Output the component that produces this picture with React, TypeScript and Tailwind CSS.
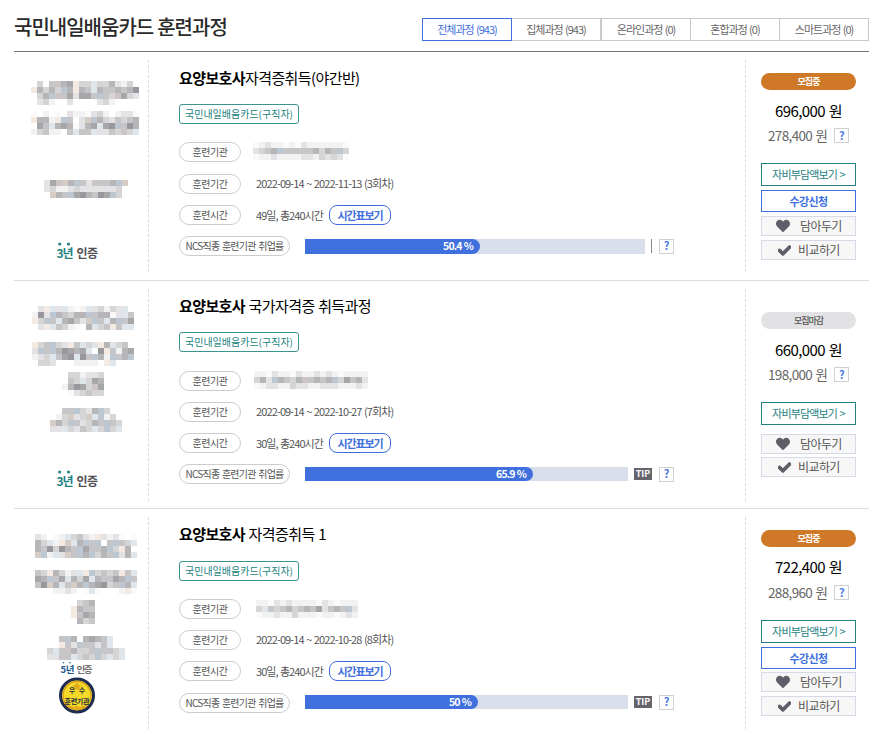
import React from 'react';
import clsx from 'clsx';
import { FaCheck, FaHeart } from 'react-icons/fa';

type Block = { x: number; y: number; rows: string[] };

type Course = {
  keyword: string;
  title: string;
  period: string;
  hours: string;
  rate: string;
  open: boolean;
  price: string;
  selfPay: string;
  tip: boolean;
  rowsClass: string;
  barClass: string;
  fillClass: string;
  institution: Block;
  logo: Block[];
  award?: boolean;
};

const tabs = ['전체과정 (943)', '집체과정 (943)', '온라인과정 (0)', '혼합과정 (0)', '스마트과정 (0)'];

// shades of the censored names, one character for each 6px cell
const shades: Record<string, string> = {
  '0': '#fafafb',
  '1': '#f2f2f3',
  '2': '#e3e3e5',
  '3': '#d5d5d6',
  '4': '#c6c6c8',
  '5': '#b6b6b9',
  '6': '#a7a6a9',
  '7': '#97979c',
  b: '#dfe6ec',
  c: '#bcc7d1',
  w: '#f5eae2',
  v: '#d5cdc5',
  p: '#cdc5c5',
};

const courses: Course[] = [
  {
    keyword: '요양보호사',
    title: '자격증취득(야간반)',
    period: '2022-09-14 ~ 2022-11-13 (3회차)',
    hours: '49일, 총240시간',
    rate: '50.4 %',
    open: true,
    price: '696,000 원',
    selfPay: '278,400 원',
    tip: false,
    rowsClass: 'grid-rows-[44px_38px_32px_31px_31px_20px]',
    barClass: 'w-[340px] h-[15px]',
    fillClass: 'w-[175px]',
    institution: { x: 0, y: 0, rows: ['0121101021111110', '2345c444p45354c3', '0112111122132320'] },
    logo: [
      {
        x: 17,
        y: 21,
        rows: ['.3.4p56w33b335213.', 'w5353c5w54b5445457', '.35cp462664c43p63b', '.231..2....231....'],
      },
      {
        x: 17,
        y: 51,
        rows: ['0.1.0.2110231.1220', 'w551wc4.2vc5324345', '.64b5650256b67c475', '13411.4b44b2243p3b'],
      },
      { x: 30, y: 120, rows: ['26pv5c42p445cv', '2311232222223.', '.v54c675476c3.'] },
    ],
  },
  {
    keyword: '요양보호사',
    title: ' 국가자격증 취득과정',
    period: '2022-09-14 ~ 2022-10-27 (7회차)',
    hours: '30일, 총240시간',
    rate: '65.9 %',
    open: false,
    price: '660,000 원',
    selfPay: '198,000 원',
    tip: true,
    rowsClass: 'grid-rows-[43px_39px_31px_31px_31px_20px]',
    barClass: 'w-[323px] h-3.5',
    fillClass: 'w-[228px]',
    institution: { x: 1, y: 0, rows: ['1102110211212101111', '352c5435p4545c36452', '0122113221122211121'] },
    logo: [
      {
        x: 18,
        y: 17,
        rows: ['.2wb2b101b23132b.', '172c54355c45502b4', 'w3c4b5642vc4b5c46', '.2wb4310.5b34w4bb'],
      },
      {
        x: 18,
        y: 53,
        rows: ['w34c32w4b32w5b34.', '2c4c57656b.7w4156', '123b467b74c51c45c', '.332...1111.wb...'],
      },
      { x: 48, y: 83, rows: ['.331223', '.43b365', '15763p6', '.023433'] },
      { x: 36, y: 119, rows: ['..44c325c3..', '.13v23vbc13.', 'v53c42354c43', '22b3243b3c3b'] },
    ],
  },
  {
    keyword: '요양보호사',
    title: ' 자격증취득 1',
    period: '2022-09-14 ~ 2022-10-28 (8회차)',
    hours: '30일, 총240시간',
    rate: '50 %',
    open: true,
    price: '722,400 원',
    selfPay: '288,960 원',
    tip: true,
    rowsClass: 'grid-rows-[44px_38px_31px_31px_32px_20px]',
    barClass: 'w-[323px] h-3.5',
    fillClass: 'w-[173px]',
    institution: { x: 3, y: 1, rows: ['11021211110210111', '3b4345345462454c2', '01121131110110121'] },
    logo: [
      {
        x: 21,
        y: 17,
        rows: ['21.01b3421w2120.0', '53b1wvb5c4c.4c43b', '5473754c6445c3w5.', 'vc1b2v4c5c354c25b'],
      },
      {
        x: 21,
        y: 53,
        rows: ['43w5312bwc3434w4b', '65c46b536b54465c4', '47v5b4v5c56734c5b', '...1121.0b0...1w0'],
      },
      { x: 57, y: 83, rows: ['.345', 'w544', 'w465', '.534'] },
      { x: 33, y: 119, rows: ['..4c5.5654b..', '..w42c4424b..', '3b4p5334c443b', '2244b343c3b3b'] },
    ],
    award: true,
  },
];

function Mosaic({ blocks, width, height }: { blocks: Block[]; width: number; height: number }) {
  return (
    <svg width={width} height={height} shapeRendering="crispEdges" aria-hidden="true">
      {blocks.map((block, i) => (
        <g key={i} transform={`translate(${block.x} ${block.y})`}>
          {block.rows.map((row, y) =>
            row.split('').map((cell, x) =>
              shades[cell] ? <rect key={`${x}-${y}`} x={x * 6} y={y * 6} width="6" height="6" fill={shades[cell]} /> : null
            )
          )}
        </g>
      ))}
    </svg>
  );
}

function Help() {
  return (
    <button className="flex size-[15px] shrink-0 items-center justify-center border border-[#cfd0d4] bg-white pb-px text-[11px] font-bold leading-none text-[#4a78e0]">
      ?
    </button>
  );
}

function Label({ children, wide }: { children: React.ReactNode; wide?: boolean }) {
  return (
    <span
      className={clsx(
        'flex h-5 shrink-0 items-center justify-center rounded-full border border-[#ccc] pb-px text-[10px] text-[#555]',
        wide ? 'w-[111px] tracking-[-0.75px] [word-spacing:1px]' : 'w-[62px] tracking-[-0.5px]'
      )}
    >
      {children}
    </span>
  );
}

function Certified({ award }: { award?: boolean }) {
  if (award) {
    return (
      <svg width="40" height="54" viewBox="0 0 40 54" className="ml-[43px] -mt-px">
        <circle cx="6.5" cy="1.8" r="0.8" fill="#1d5a92" />
        <circle cx="13" cy="1.8" r="0.8" fill="#1d5a92" />
        <text x="3.5" y="12" fontSize="9.5" fontWeight="700" fill="#1d5a92" textLength="14">5년</text>
        <text x="19.5" y="12" fontSize="9.5" fontWeight="500" fill="#555" textLength="16">인증</text>
        <circle cx="20" cy="34.5" r="16.5" fill="#f5da2a" stroke="#1d2c50" strokeWidth="3" />
        <circle cx="20" cy="34.5" r="14" fill="none" stroke="#d9a520" strokeWidth="1.5" />
        <path d="M20 21l1.5 3 3 .5-2 2 .5 3-3-1.5-3 1.5.5-3-2-2 3-.5z" fill="#e1aa1c" />
        <path d="M11 44l3 1 3 1 3-1 3 1 3-1 3-1-3 3-6 1-6-1z" fill="#e1aa1c" />
        <text x="12" y="31.5" fontSize="6.5" fontWeight="700" fill="#222b3c">우</text>
        <text x="22" y="31.5" fontSize="6.5" fontWeight="700" fill="#222b3c">수</text>
        <text x="7.5" y="42.5" fontSize="7" fontWeight="700" fill="#222b3c" textLength="25">훈련기관</text>
      </svg>
    );
  }
  return (
    <svg width="44" height="20" viewBox="0 0 44 20" className="ml-[42px]">
      <circle cx="3.7" cy="2" r="1.6" fill="#238280" />
      <circle cx="12.5" cy="2" r="1.6" fill="#238280" />
      <text x="0.5" y="15.5" fontSize="12" fontWeight="700" fill="#238280" textLength="17">3년</text>
      <text x="20.5" y="15.5" fontSize="12" fontWeight="700" fill="#505054" textLength="21.5">인증</text>
    </svg>
  );
}

function CourseInfo({ course }: { course: Course }) {
  return (
    <div className={clsx('grid w-[596px] content-start items-start pl-[30px]', course.rowsClass)}>
      <h2
        className={clsx(
          'whitespace-pre text-[15px] leading-[22px] tracking-[-0.6px] text-black [word-spacing:0.8px]',
          course.tip ? 'mt-1.5' : 'mt-[7px]'
        )}
      >
        <strong className="font-bold">{course.keyword}</strong>
        {course.title}
      </h2>
      <span className="flex h-5 w-[120px] items-center justify-center rounded-[3px] border border-[#3a9490] pb-px text-[10px] text-[#238280]">
        국민내일배움카드(구직자)
      </span>
      <div className="flex">
        <Label>훈련기관</Label>
        <div className="ml-3">
          <Mosaic blocks={[course.institution]} width={130} height={20} />
        </div>
      </div>
      <div className="flex items-center">
        <Label>훈련기간</Label>
        <span className="ml-[15px] -mt-0.5 text-[11px] tracking-[-0.87px] text-[#555] [word-spacing:0.8px]">
          {course.period}
        </span>
      </div>
      <div className="flex items-center">
        <Label>훈련시간</Label>
        <span className="ml-[15px] w-[73px] whitespace-nowrap text-[11px] tracking-[-0.95px] text-[#555] [word-spacing:0.8px]">
          {course.hours}
        </span>
        <button className="flex h-5 w-[62px] items-center justify-center rounded-lg border border-[#4070dd] text-[11px] font-bold tracking-[-1.1px] text-[#4070dd]">
          시간표보기
        </button>
      </div>
      <div className="flex h-5 items-center">
        <Label wide>NCS직종 훈련기관 취업률</Label>
        <div className={clsx('flex items-center', course.award && 'mb-0.5')}>
          <div className={clsx('ml-[15px] bg-[#d8deea]', course.barClass)}>
            <div
              className={clsx(
                'flex h-full items-center justify-end rounded-r-full bg-[#4070dd] pb-px pr-[7px] text-[10.5px] font-bold tracking-[-0.85px] text-white [word-spacing:0.5px]',
                course.fillClass
              )}
            >
              {course.rate}
            </div>
          </div>
          {course.tip ? (
            <span className="ml-1.5 mr-[7px] flex h-3 w-[18px] items-center justify-center bg-[#66656c] text-[9px] font-bold text-white">
              TIP
            </span>
          ) : (
            <span className="ml-1.5 mr-[7px] h-3.5 w-px bg-[#888]" />
          )}
          <Help />
        </div>
      </div>
    </div>
  );
}

function CourseActions({ course }: { course: Course }) {
  return (
    <div className={clsx('ml-[15px] flex w-[95px] flex-col', course.open ? 'pt-[13px]' : 'pt-[23px]')}>
      <span
        className={clsx(
          'flex h-[17px] items-center justify-center rounded-full text-[9px] tracking-[-1px]',
          course.open ? 'bg-[#cf7928] font-bold text-white' : 'bg-[#e2e2e4] font-medium text-[#555]'
        )}
      >
        {course.open ? '모집중' : '모집마감'}
      </span>
      <p
        className={clsx(
          'text-center text-[15px] leading-[22px] tracking-[-0.6px] text-black [word-spacing:1px]',
          course.award ? 'mb-px mt-[9px]' : 'mt-2.5'
        )}
      >
        {course.price}
      </p>
      <div className="mt-1.5 flex h-[15px] items-center justify-between pl-[7px] pr-[7px] text-[13.5px] tracking-[-0.65px] text-[#666] [word-spacing:1px]">
        {course.selfPay}
        <Help />
      </div>
      <button className="mt-5 flex h-[23px] items-center justify-center border border-[#238280] pb-px text-[11px] tracking-[-0.85px] text-[#238280] [word-spacing:1px]">
        자비부담액보기 &gt;
      </button>
      {course.open && (
        <button className="mt-1 flex h-[22px] items-center justify-center border border-[#4070dd] text-[11px] font-bold tracking-[-0.6px] text-[#4070dd]">
          수강신청
        </button>
      )}
      <button
        className={clsx(
          'flex h-5 items-center border border-[#d6dae6] bg-[#f7f7f7] pl-3.5 text-[12px] tracking-[-0.6px] text-[#555]',
          !course.open ? 'mt-[9px]' : course.award ? 'mt-[3px]' : 'mt-1'
        )}
      >
        <FaHeart className="mr-2.5 size-3.5 text-[#5f5e68]" />
        담아두기
      </button>
      <button
        className={clsx(
          'flex h-5 items-center border border-[#d6dae6] bg-[#f7f7f7] pl-4 text-[12px] tracking-[-0.6px] text-[#555]',
          course.open ? 'mt-1' : 'mt-[3px]'
        )}
      >
        <FaCheck className="mr-[7px] size-[13px] stroke-[#5f5e68] stroke-[40] text-[#5f5e68]" />
        비교하기
      </button>
    </div>
  );
}

export default function App() {
  return (
    <main className="h-[735px] w-[887px] overflow-hidden bg-white pl-3.5 pr-[18px] font-['Noto_Sans_CJK_KR',sans-serif]">
      <header className="flex h-[52px] items-start justify-between border-b border-[#777]">
        <h1 className="mt-3 text-[20px] font-medium leading-[30px] tracking-[-1px] text-[#2a2a2a] [word-spacing:0.5px]">
          국민내일배움카드 훈련과정
        </h1>
        <nav className="mt-[18px] flex h-[23px] w-[447px]">
          {tabs.map((tab, i) => (
            <a
              key={tab}
              href="#"
              className={clsx(
                'flex flex-1 items-center justify-center border text-[11px] tracking-[-1px] [word-spacing:0.8px]',
                i === 0 && 'border-[#4070dd] text-[#4070dd]',
                i > 0 && 'border-[#c9c9cc] text-[#666]',
                i > 0 && i !== 2 && 'border-l-0'
              )}
            >
              {tab}
            </a>
          ))}
        </nav>
      </header>

      {courses.map((course, i) => (
        <section
          key={i}
          className={clsx('flex border-b border-[#ddd] pt-2', i === 0 ? 'h-[229px]' : 'h-[228px]')}
        >
          <div className="flex h-[212px] w-[135px] shrink-0 flex-col border-r border-dashed border-[#ddd]">
            <Mosaic blocks={course.logo} width={134} height={course.award ? 145 : i === 0 ? 182 : 181} />
            <Certified award={course.award} />
          </div>
          <div className="flex h-[212px] w-[597px] shrink-0 border-r border-dashed border-[#ddd]">
            <CourseInfo course={course} />
          </div>
          <CourseActions course={course} />
        </section>
      ))}
    </main>
  );
}
